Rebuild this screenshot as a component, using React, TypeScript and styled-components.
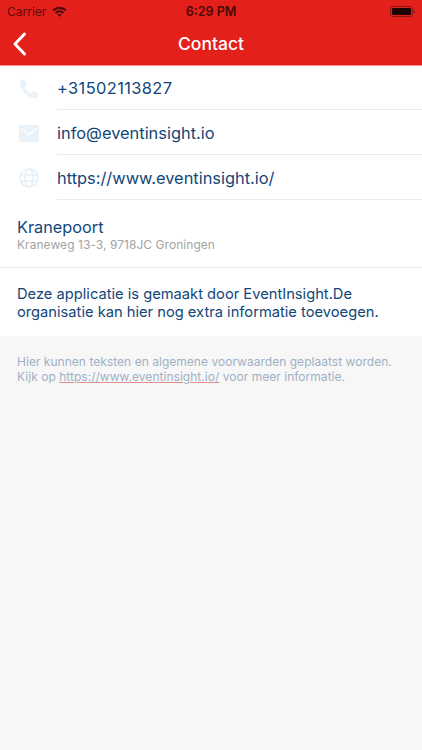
import React from "react";
import styled, {createGlobalStyle} from "styled-components";

const Global = createGlobalStyle`
  html, body { margin: 0; padding: 0; height: 100%; background: #f7f7f7; }
  body { font-family: Inter, "Liberation Sans", sans-serif; }
  #root { min-height: 100%; }
`;

const Page = styled.div`
  width: 422px;
  height: 750px;
  overflow: hidden;
  background: #f7f7f7;
`;
const Header = styled.header`
  background: #e4201b;
  height: 65px;
  border-bottom: 1px solid #fb8a85;
`;
const StatusBar = styled.div`
  height: 22px;
  display: grid;
  grid-template-columns: 1fr auto 1fr;
  align-items: center;
  padding: 0 7px;
  color: #5c0b09;
  font-size: 12px;
`;
const Carrier = styled.div`
  display: flex;
  align-items: center;
  gap: 6px;
`;
const Clock = styled.div`
  font-weight: 600;
  font-size: 12.5px;
  color: #4a0806;
`;
const Battery = styled.div`
  justify-self: end;
  display: flex;
  align-items: center;
`;
const NavBar = styled.div`
  height: 43px;
  position: relative;
  display: flex;
  align-items: center;
  justify-content: center;
  color: #fff;
  font-size: 17.5px;
  font-weight: 500;
`;
const Back = styled.svg`
  position: absolute;
  left: 12px;
  top: 9px;
`;
const ContactList = styled.section`
  background: #fff;
`;
const Row = styled.div`
  height: 45px;
  display: flex;
  &:first-child {
    height: 44px;
  }
`;
const IconCell = styled.div`
  width: 57px;
  display: flex;
  align-items: center;
  justify-content: center;
  padding-top: 1px;
  box-sizing: border-box;
`;
const RowText = styled.div<{wide?: boolean}>`
  flex: 1;
  display: flex;
  align-items: center;
  padding-top: 1px;
  border-bottom: 1px solid #ececec;
  color: #124679;
  font-size: 16.4px;
  ${props => (props.wide ? "letter-spacing: 0.4px;" : "")}
`;
const Location = styled.section`
  background: #fff;
  height: 68px;
  box-sizing: border-box;
  padding: 17px 17px 0;
  border-bottom: 1px solid #ececec;
`;
const PlaceName = styled.div`
  color: #124679;
  font-size: 16.3px;
  line-height: 20px;
`;
const Address = styled.div`
  color: #a3a3a3;
  font-size: 12px;
  line-height: 15px;
  letter-spacing: 0.05px;
`;
const Info = styled.section`
  background: #fff;
  height: 68px;
  box-sizing: border-box;
  padding: 17px 17px 0;
  color: #124679;
  font-size: 14.7px;
  line-height: 18px;
`;
const Legal = styled.section`
  padding: 18px 17px 0;
  color: #9fb0c5;
  font-size: 12px;
  line-height: 15px;
  letter-spacing: 0.03px;
`;
const LegalLink = styled.span`
  text-decoration: underline;
  text-decoration-color: #e58a8d;
`;

export default function App(): React.JSX.Element {
  return (
    <Page>
      <Global />
      <Header>
        <StatusBar>
          <Carrier>
            Carrier
            <svg width="15" height="11" viewBox="0 0 15 11">
              <path d="M0.5 3.6A10 10 0 0 1 14.5 3.6L13 5.2A8 8 0 0 0 2 5.2Z M3 6.2A6.4 6.4 0 0 1 12 6.2L10.5 7.7A4.3 4.3 0 0 0 4.5 7.7Z M5.5 8.7A2.8 2.8 0 0 1 9.5 8.7L7.5 10.8Z" fill="#4a0806" />
            </svg>
          </Carrier>
          <Clock>6:29 PM</Clock>
          <Battery>
            <svg width="25" height="11" viewBox="0 0 25 11">
              <rect x="0.5" y="0.5" width="22" height="10" rx="2.5" fill="none" stroke="#8a1512" />
              <rect x="2" y="2" width="19" height="7" rx="1" fill="#1f0302" />
              <rect x="23.5" y="4" width="1" height="3" fill="#8a1512" />
            </svg>
          </Battery>
        </StatusBar>
        <NavBar>
          <Back width="16" height="26" viewBox="0 0 16 26">
            <path d="M12.5 3L3 13L12.5 23" fill="none" stroke="#fff" strokeWidth="3" strokeLinecap="round" strokeLinejoin="round" />
          </Back>
          Contact
        </NavBar>
      </Header>
      <ContactList>
        <Row>
          <IconCell>
            <svg width="20" height="20" viewBox="0 0 20 20">
              <path d="M1.2 2.4C1.2 1.6 1.8 1 2.4 0.8L4.4 0.2C5 0 5.6 0.3 5.8 0.9L7.4 5C7.6 5.6 7.4 6.1 7 6.4L5.4 7.6C6.4 10.4 9 13.2 11.8 14.4L13.2 12.8C13.6 12.4 14.2 12.3 14.7 12.5L18.8 14.4C19.4 14.7 19.7 15.3 19.5 15.9L18.9 17.9C18.7 18.7 18 19.3 17.2 19.3C8.5 19.3 1 11 1.2 2.4Z" fill="#e9f2f9" />
            </svg>
          </IconCell>
          <RowText wide>+31502113827</RowText>
        </Row>
        <Row>
          <IconCell>
            <svg width="20" height="17" viewBox="0 0 20 17">
              <path d="M1.5 0H18.5C19.4 0 20 0.6 20 1.5V15.5C20 16.4 19.4 17 18.5 17H1.5C0.6 17 0 16.4 0 15.5V1.5C0 0.6 0.6 0 1.5 0Z" fill="#e9f2f9" />
              <path d="M2.5 3.5L10 9.5L17.5 3.5" fill="none" stroke="#fff" strokeWidth="1.6" />
            </svg>
          </IconCell>
          <RowText>info@eventinsight.io</RowText>
        </Row>
        <Row>
          <IconCell>
            <svg width="20" height="20" viewBox="0 0 20 20" fill="none" stroke="#e9f2f9" strokeWidth="1.8">
              <circle cx="10" cy="10" r="9.1" />
              <ellipse cx="10" cy="10" rx="4.2" ry="9.1" />
              <path d="M1.5 6.8H18.5M1.5 13.2H18.5" />
            </svg>
          </IconCell>
          <RowText>https://www.eventinsight.io/</RowText>
        </Row>
      </ContactList>
      <Location>
        <PlaceName>Kranepoort</PlaceName>
        <Address>Kraneweg 13-3, 9718JC Groningen</Address>
      </Location>
      <Info>
        Deze applicatie is gemaakt door EventInsight.De
        <br />
        organisatie kan hier nog extra informatie toevoegen.
      </Info>
      <Legal>
        Hier kunnen teksten en algemene voorwaarden geplaatst worden.
        <br />
        Kijk op <LegalLink>https://www.eventinsight.io/</LegalLink> voor meer informatie.
      </Legal>
    </Page>
  );
}
